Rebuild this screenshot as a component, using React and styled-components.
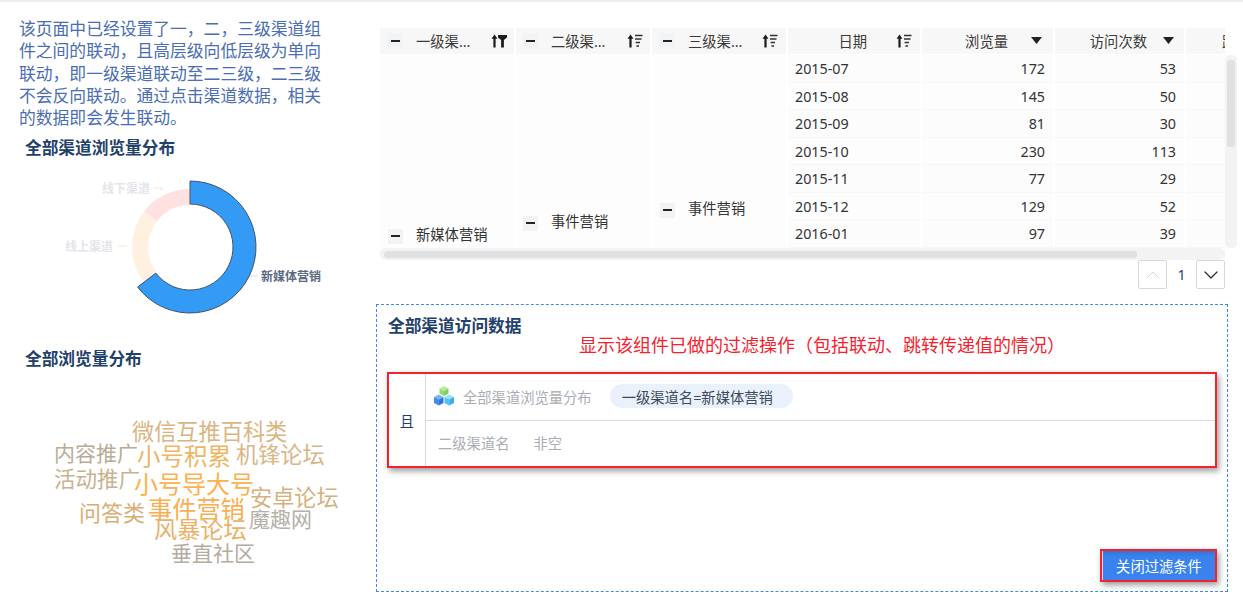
import { Fragment } from 'react';
import styled, { createGlobalStyle } from 'styled-components';
import { ChevronUp, ChevronDown } from 'lucide-react';

const GlobalStyle = createGlobalStyle`
  html, body {
    margin: 0;
    padding: 0;
    background: #fff;
  }
  body {
    font-family: "Noto Sans", "Noto Sans CJK SC", sans-serif;
  }
`;

const rows = [
  ['2015-07', 172, 53],
  ['2015-08', 145, 50],
  ['2015-09', 81, 30],
  ['2015-10', 230, 113],
  ['2015-11', 77, 29],
  ['2015-12', 129, 52],
  ['2016-01', 97, 39],
];

const words = [
  { t: '微信互推百科类', x: 132, y: 431, s: 22.2, c: '#dbb57f' },
  { t: '内容推广', x: 54, y: 453, s: 21, c: '#b9ac97' },
  { t: '小号积累', x: 137, y: 456, s: 23.5, c: '#f0b560' },
  { t: '机锋论坛', x: 236, y: 454, s: 22.2, c: '#d9b587' },
  { t: '活动推广', x: 54, y: 478, s: 21.5, c: '#c8b28e' },
  { t: '小号导大号', x: 134, y: 483, s: 24, c: '#fdb14e' },
  { t: '安卓论坛', x: 250, y: 497, s: 22.2, c: '#d6b180' },
  { t: '问答类', x: 79, y: 512, s: 22, c: '#d9ae75' },
  { t: '事件营销', x: 148, y: 508, s: 24.2, c: '#f9ae4f' },
  { t: '魔趣网', x: 249, y: 519, s: 21, c: '#b5b0a8' },
  { t: '风暴论坛', x: 154, y: 529, s: 23.2, c: '#e9b16a' },
  { t: '垂直社区', x: 171, y: 553, s: 21, c: '#b5aca0' },
];

// donut arc between two angles, clockwise from 12 o'clock
const arc = (r0, r1, a0, a1) => {
  const p = (r, a) => {
    const t = (a * Math.PI) / 180;
    return `${(190 + r * Math.sin(t)).toFixed(2)} ${(247 - r * Math.cos(t)).toFixed(2)}`;
  };
  const big = a1 - a0 > 180 ? 1 : 0;
  return `M${p(r1, a0)} A${r1} ${r1} 0 ${big} 1 ${p(r1, a1)} L${p(r0, a1)} A${r0} ${r0} 0 ${big} 0 ${p(r0, a0)} Z`;
};

const Page = styled.div`
  width: 1243px;
  height: 602px;
  box-sizing: border-box;
  border-top: 2px solid #eeeeee;
  display: flex;
  overflow: hidden;
  color: #333;
  font-size: 14.3px;
`;

const LeftColumn = styled.div`
  width: 376px;
  flex: none;
`;

const Intro = styled.p`
  margin: 16px 0 0 19px;
  width: 306px;
  font-size: 16.8px;
  line-height: 22.3px;
  color: #4a6db3;
`;

const ChartTitle = styled.h3`
  margin: ${(p) => p.$top}px 0 0 25px;
  font-size: 16.7px;
  line-height: 24px;
  font-weight: 700;
  color: #23406b;
`;

const ChartSvg = styled.svg`
  display: block;
  margin-top: ${(p) => p.$top}px;
`;

const RightColumn = styled.div`
  flex: 1;
  min-width: 0;
  padding-top: 26px;
`;

const TableArea = styled.div`
  margin-left: 4px;
  display: grid;
  grid-template-columns: 845px 12px;
  grid-template-rows: 27px 193px 12px;
  width: 857px;
`;

const Columns = styled.div`
  display: grid;
  grid-template-columns: 134px 2px 134px 2px 134px 2px 132px 2px 131px 2px 129px 2px 100px;
`;

const HeaderRow = styled(Columns)`
  grid-column: 1 / 3;
  width: 845px;
  overflow: hidden;
  height: 26px;
  background: #fff;
`;

const HeadCell = styled.div`
  background: #f7f7f7;
  display: flex;
  align-items: center;
  justify-content: ${(p) => (p.$end ? 'flex-end' : 'flex-start')};
  gap: ${(p) => p.$gap || 0}px;
  padding: ${(p) => `0 ${p.$right || 0}px 1px ${p.$left || 0}px`};
  grid-column: ${(p) => p.$col};
  white-space: nowrap;
  color: #3a3a3a;
  overflow: hidden;
`;

const MinusBox = styled.span`
  width: 15px;
  height: 15px;
  flex: none;
  background: #f2f3f4;
  display: flex;
  align-items: center;
  justify-content: center;
  &::before {
    content: '';
    width: 9px;
    height: 2px;
    background: #222;
  }
`;

const Label = styled.span`
  margin-left: 13px;
  flex: 1;
`;

const TableBody = styled(Columns)`
  overflow: hidden;
  grid-template-rows: repeat(7, 27.5px);
  background: #fff;
`;

const MergedCell = styled.div`
  grid-row: 1 / 8;
  grid-column: ${(p) => p.$col};
  background: #fdfdfd;
  display: flex;
  align-items: flex-end;
  padding: ${(p) => `0 0 ${p.$bottom}px ${p.$left}px`};
  white-space: nowrap;
`;

const DataCell = styled.div`
  grid-column: ${(p) => p.$col};
  background: ${(p) => (p.$odd ? '#fcfcfc' : '#fdfdfd')};
  border-bottom: 1px solid #f7f7f7;
  box-sizing: border-box;
  display: flex;
  align-items: center;
  justify-content: ${(p) => (p.$num ? 'flex-end' : 'flex-start')};
  padding: ${(p) => (p.$num ? '1px 8px 0 0' : '1px 0 0 7px')};
`;

const VerticalTrack = styled.div`
  background: #f3f3f3;
  border-radius: 5px;
  padding: 5px 2px 0;
`;

const VerticalThumb = styled.div`
  height: 87px;
  border-radius: 3px;
  background: #e0e1e3;
`;

const HorizontalTrack = styled.div`
  background: #f3f3f3;
  border-radius: 5px;
  padding: 3px 4px;
  grid-column: 1 / 2;
`;

const HorizontalThumb = styled.div`
  width: 753px;
  height: 7px;
  border-radius: 3px;
  background: #e0e1e3;
`;

const Pager = styled.div`
  width: 845px;
  margin-left: 4px;
  display: flex;
  justify-content: flex-end;
  align-items: center;
  height: 29px;
`;

const PageButton = styled.div`
  width: 29px;
  height: 29px;
  box-sizing: border-box;
  border: 1px solid #d5d9df;
  border-radius: 2px;
  display: flex;
  align-items: center;
  justify-content: center;
  color: ${(p) => (p.$off ? '#d5d9de' : '#2b2b2b')};
`;

const PageNumber = styled.span`
  width: 29px;
  text-align: center;
  color: #1c3f78;
`;

const FilterPanel = styled.div`
  margin-top: 15px;
  width: 852px;
  height: 288px;
  box-sizing: border-box;
  border: 1px dashed #3d8bf0;
  padding: 12px 10px 9px;
  display: flex;
  flex-direction: column;
`;

const PanelTitle = styled.h3`
  margin: 0 0 0 1px;
  font-size: 16.7px;
  line-height: 18px;
  font-weight: 700;
  color: #23406b;
`;

const Note = styled.div`
  margin-left: 192px;
  font-size: 18px;
  line-height: 20px;
  color: #f5222d;
  white-space: nowrap;
`;

const HighlightBox = styled.div`
  margin-top: 17px;
  height: 96px;
  box-sizing: border-box;
  border: 2px solid #f5222d;
  box-shadow: 2px 3px 6px rgba(0, 0, 0, 0.4);
  display: flex;
`;

const LogicCell = styled.div`
  width: 36px;
  flex: none;
  border-right: 1px solid #d5dae0;
  display: flex;
  align-items: center;
  justify-content: center;
  color: #1f3f70;
`;

const ConditionList = styled.div`
  flex: 1;
  display: flex;
  flex-direction: column;
`;

const ConditionRow = styled.div`
  flex: 1;
  display: flex;
  align-items: center;
  padding: 0 0 1px ${(p) => p.$left}px;
  color: #a9adb3;
  & + & {
    border-top: 1px solid #d5dae0;
  }
`;

const SourceName = styled.span`
  margin-left: 9px;
`;

const Pill = styled.span`
  margin-left: 18px;
  height: 24px;
  padding: 0 20px 0 12px;
  border-radius: 12px;
  background: #eaf1fb;
  color: #3d4a5c;
  display: flex;
  align-items: center;
`;

const EmptyTag = styled.span`
  margin-left: 24px;
`;

const PanelFooter = styled.div`
  margin-top: auto;
  display: flex;
  justify-content: flex-end;
`;

const CloseButton = styled.button`
  width: 117px;
  height: 33px;
  box-sizing: border-box;
  border: 2px solid #f5222d;
  background: linear-gradient(#3474d6 0, #3a82ee 6px);
  box-shadow: 2px 3px 6px rgba(0, 0, 0, 0.4), inset 1px 0 0 #c9d6ea;
  color: #fff;
  font: inherit;
  padding: 0 0 0 1px;
`;

const SortIcon = ({ active }) => (
  <svg width="16" height="14" viewBox="0 0 16 14" style={{ flex: 'none' }}>
    <path d="M3.5 0.5 L6.5 4.8 H4.6 V13.5 H2.4 V4.8 H0.5 Z" fill="#1c1c1c" />
    {active ? (
      <path d="M7 1 H16 V3.4 L12.9 6 V13.5 H10.1 V6 L7 3.4 Z" fill="#1c1c1c" />
    ) : (
      <path d="M8 1.5 H15.5 M8 5 H14.5 M8.6 8.5 H13 M9.4 12 H12" stroke="#333" strokeWidth="1.3" />
    )}
  </svg>
);

const DownTriangle = () => (
  <svg width="11" height="7" viewBox="0 0 11 7" style={{ flex: 'none' }}>
    <path d="M0 0 H11 L5.5 7 Z" fill="#222" />
  </svg>
);

const CubesIcon = () => (
  <svg width="20" height="20" viewBox="0 0 20 20" style={{ flex: 'none' }}>
    <path d="M10 0 L14.5 2.4 L10 4.8 L5.5 2.4 Z" fill="#b8eb94" />
    <path d="M5.5 2.4 L10 4.8 V10 L5.5 7.6 Z" fill="#8fdc74" />
    <path d="M14.5 2.4 L10 4.8 V10 L14.5 7.6 Z" fill="#7dd066" />
    <path d="M4.8 8.5 L9.5 11 L4.8 13.5 L0 11 Z" fill="#7ab2f7" />
    <path d="M0 11 L4.8 13.5 V19.5 L0 17 Z" fill="#3f8bec" />
    <path d="M9.5 11 L4.8 13.5 V19.5 L9.5 17 Z" fill="#2f75dc" />
    <path d="M15.2 8.5 L20 11 L15.2 13.5 L10.5 11 Z" fill="#9be2f9" />
    <path d="M10.5 11 L15.2 13.5 V19.5 L10.5 17 Z" fill="#4fc3f3" />
    <path d="M20 11 L15.2 13.5 V19.5 L20 17 Z" fill="#35b0ea" />
  </svg>
);

const DonutChart = () => (
  <ChartSvg $top={5} width="376" height="165" viewBox="0 165 376 165">
    <path d={arc(42, 58, 233, 308)} fill="#fff0e0" />
    <path d={arc(42, 58, 308, 360)} fill="#ffe1e1" />
    <path d={arc(43, 66, 0, 232.6)} fill="#339af5" stroke="#44546a" strokeWidth="1" />
    <path d="M153 188 H161 L163 190" fill="none" stroke="#ffdede" strokeWidth="1.2" />
    <path d="M118 246 H127" fill="none" stroke="#ffe6cc" strokeWidth="1.2" />
    <path d="M251 276 H258" fill="none" stroke="#d6e6fb" strokeWidth="1.2" />
    <text x="102" y="188" fontSize="12" fontWeight="700" dominantBaseline="central" fill="#e3e5ea">线下渠道</text>
    <text x="65" y="246" fontSize="12" fontWeight="700" dominantBaseline="central" fill="#e3e5ea">线上渠道</text>
    <text x="261" y="276" fontSize="12" fontWeight="700" dominantBaseline="central" fill="#5a6a82">新媒体营销</text>
  </ChartSvg>
);

const WordCloud = () => (
  <ChartSvg $top={29} width="376" height="190" viewBox="0 400 376 190">
    {words.map((w) => (
      <text key={w.t} x={w.x} y={w.y} fontSize={w.s} fill={w.c} dominantBaseline="central">
        {w.t}
      </text>
    ))}
  </ChartSvg>
);

const App = () => {
  return (
    <>
      <GlobalStyle />
      <Page>
        <LeftColumn>
          <Intro>
            该页面中已经设置了一，二，三级渠道组件之间的联动，且高层级向低层级为单向联动，即一级渠道联动至二三级，二三级不会反向联动。通过点击渠道数据，相关的数据即会发生联动。
          </Intro>
          <ChartTitle $top={7}>全部渠道浏览量分布</ChartTitle>
          <DonutChart />
          <ChartTitle $top={17}>全部浏览量分布</ChartTitle>
          <WordCloud />
        </LeftColumn>
        <RightColumn>
          <TableArea>
            <HeaderRow>
              <HeadCell $col={1} $left={8} $right={7}>
                <MinusBox />
                <Label>一级渠...</Label>
                <SortIcon active />
              </HeadCell>
              <HeadCell $col={3} $left={7} $right={7}>
                <MinusBox />
                <Label>二级渠...</Label>
                <SortIcon />
              </HeadCell>
              <HeadCell $col={5} $left={8} $right={8}>
                <MinusBox />
                <Label>三级渠...</Label>
                <SortIcon />
              </HeadCell>
              <HeadCell $col={7} $end $gap={29} $right={8}>
                <span>日期</span>
                <SortIcon />
              </HeadCell>
              <HeadCell $col={9} $end $gap={23} $right={11}>
                <span>浏览量</span>
                <DownTriangle />
              </HeadCell>
              <HeadCell $col={11} $end $gap={16} $right={10}>
                <span>访问次数</span>
                <DownTriangle />
              </HeadCell>
              <HeadCell $col={13} $left={36}>
                <span>跳出次数</span>
              </HeadCell>
            </HeaderRow>
            <TableBody>
              <MergedCell $col={1} $left={8} $bottom={4}>
                <MinusBox />
                <Label>新媒体营销</Label>
              </MergedCell>
              <MergedCell $col={3} $left={7} $bottom={17}>
                <MinusBox />
                <Label>事件营销</Label>
              </MergedCell>
              <MergedCell $col={5} $left={8} $bottom={30}>
                <MinusBox />
                <Label>事件营销</Label>
              </MergedCell>
              {rows.map(([date, views, visits], i) => (
                <Fragment key={date}>
                  <DataCell $col={7} $odd={i % 2 === 0}>{date}</DataCell>
                  <DataCell $col={9} $odd={i % 2 === 0} $num>{views}</DataCell>
                  <DataCell $col={11} $odd={i % 2 === 0} $num>{visits}</DataCell>
                  <DataCell $col={13} $odd={i % 2 === 0} />
                </Fragment>
              ))}
            </TableBody>
            <VerticalTrack>
              <VerticalThumb />
            </VerticalTrack>
            <HorizontalTrack>
              <HorizontalThumb />
            </HorizontalTrack>
          </TableArea>
          <Pager>
            <PageButton $off>
              <ChevronUp size={24} strokeWidth={1} />
            </PageButton>
            <PageNumber>1</PageNumber>
            <PageButton>
              <ChevronDown size={24} strokeWidth={1.2} />
            </PageButton>
          </Pager>
          <FilterPanel>
            <PanelTitle>全部渠道访问数据</PanelTitle>
            <Note>显示该组件已做的过滤操作（包括联动、跳转传递值的情况）</Note>
            <HighlightBox>
              <LogicCell>且</LogicCell>
              <ConditionList>
                <ConditionRow $left={8}>
                  <CubesIcon />
                  <SourceName>全部渠道浏览量分布</SourceName>
                  <Pill>一级渠道名=新媒体营销</Pill>
                </ConditionRow>
                <ConditionRow $left={12}>
                  <span>二级渠道名</span>
                  <EmptyTag>非空</EmptyTag>
                </ConditionRow>
              </ConditionList>
            </HighlightBox>
            <PanelFooter>
              <CloseButton>关闭过滤条件</CloseButton>
            </PanelFooter>
          </FilterPanel>
        </RightColumn>
      </Page>
    </>
  );
};

export default App;
